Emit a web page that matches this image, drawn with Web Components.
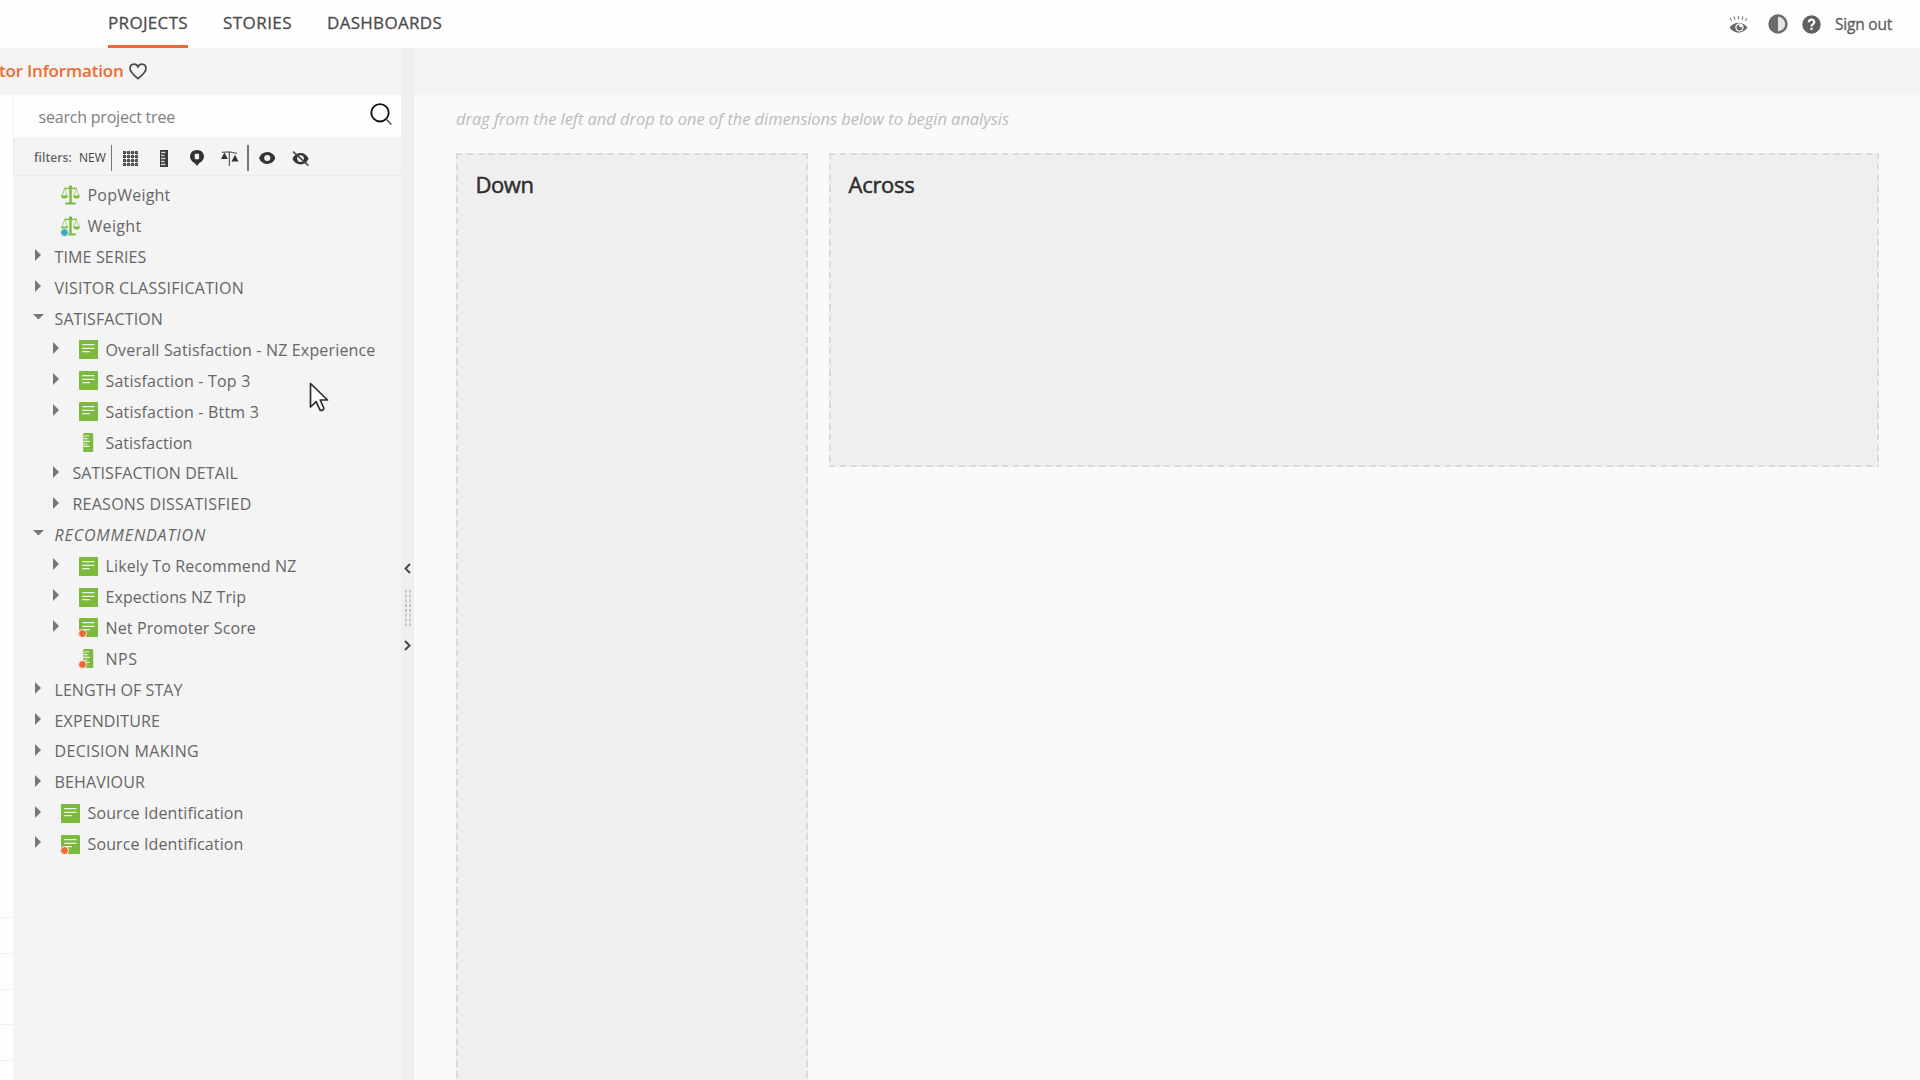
<!DOCTYPE html>
<html lang="en">
<head>
<meta charset="utf-8">
<title>Projects</title>
<style>
  html, body {
    height: 100%;
    margin: 0;
    overflow: hidden;
  }

  body {
    background: #fefefe;
    font-family: "Open Sans", "Noto Sans", sans-serif;
  }
</style>
</head>
<body>
<project-page></project-page>

<script>
// Spreads the letters of an element so that its text takes a given width
function fitText(el, width) {
  if (!width) return;
  el.style.letterSpacing = '0px';
  const natural = el.getBoundingClientRect().width;
  const count = el.textContent.length;
  el.style.letterSpacing = `${(width - natural) / count}px`;
}

// fit-text: a single line of text with a set width
class FitText extends HTMLElement {
  constructor() {
    super();
    this.attachShadow({ mode: 'open' });
    this.shadowRoot.innerHTML = `
      <style>
        :host { display: inline-block; white-space: nowrap; flex: none; }
      </style>
      <slot></slot>
    `;
  }

  connectedCallback() {
    fitText(this, Number(this.getAttribute('width')));
  }
}

// svg bodies for ui-icon, all drawn on their own viewBox
const ICONS = {
  wink: ['0 0 20 20', `
    <g fill="none" stroke="#777" stroke-width="1.1">
      <path d="M1 3.2 3 6M5.2 1.5 6.4 5M10 .8V4.5M14.8 1.5 13.6 5M19 3.2 17 6"/>
    </g>
    <path d="M.6 13.2C5 6.6 15 6.6 19.4 13.2 15 20.4 5 20.4.6 13.2z" fill="#686868"/>
    <circle cx="11" cy="13" r="4.4" fill="#fefefe"/>
    <circle cx="11" cy="13.2" r="3" fill="#686868"/>
    <circle cx="12.3" cy="11.6" r="1.5" fill="#fefefe"/>`],
  contrast: ['0 0 20 20', `
    <circle cx="10" cy="10" r="9.7" fill="#6b6b6b"/>
    <path d="M10 2.8a7.2 7.2 0 0 1 0 14.4z" fill="#e6e6e6"/>`],
  help: ['0 0 20 20', `
    <circle cx="10" cy="10" r="9.7" fill="#606060"/>
    <path d="M7.2 7.6C7.2 4 13 4 12.9 7.5 12.8 9.6 10 9.6 10 12" fill="none" stroke="#fefefe" stroke-width="2.3"/>
    <rect x="8.8" y="13.4" width="2.4" height="2.3" fill="#fefefe"/>`],
  heart: ['0 0 18 17', `
    <path d="M9 15.6C4 11.5 1 8.8 1 5.4 1 .6 7 -.4 9 3.8 11 -.4 17 .6 17 5.4 17 8.8 14 11.5 9 15.6z" fill="none" stroke="#484848" stroke-width="1.7"/>`],
  search: ['0 0 22 22', `
    <circle cx="10" cy="9.8" r="8.7" fill="none" stroke="#111" stroke-width="1.9"/>
    <path d="M16 16 21.4 21.4" stroke="#444" stroke-width="1.4"/>`],
  grid: ['0 0 15 15', `
    <g fill="#3a3a3a">
      ${[0, 4, 8, 12].map(y => [0, 4, 8, 12].map(x =>
        `<rect x="${x}" y="${y}" width="3" height="3" rx=".6"/>`).join('')).join('')}
    </g>
    <path d="M0 1.5H15M0 5.5H15M0 9.5H15M0 13.5H15M1.5 0V15M5.5 0V15M9.5 0V15M13.5 0V15" stroke="#666" stroke-width=".6"/>`],
  ruler: ['0 0 8 17', `
    <rect width="8" height="17" fill="#3a3a3a"/>
    <path d="M1 2.5H5.5M1 5.5H4.5M1 8.5H5.5M1 11.5H4.5M1 14.5H5.5" stroke="#ccc" stroke-width="1.3"/>`],
  pin: ['0 0 14 16', `
    <path d="M7 0C11 0 14 2.8 14 6.6 14 10 11 12.4 9.4 13L7 16 4.6 13C3 12.4 0 10 0 6.6 0 2.8 3 0 7 0z" fill="#333"/>
    <rect x="4.7" y="3.8" width="4.4" height="5.4" rx="1" fill="#f0f0f0"/>`],
  balance: ['0 0 18 15', `
    <path d="M1 1.3 8.5.8 16.5 2.3M8.6 1V15" fill="none" stroke="#666" stroke-width="1.3"/>
    <path d="M0 8 3.6 1.5 7 8z" fill="#333"/>
    <path d="M10.8 10.5 14.4 3.8 18 10.5z" fill="#333"/>`],
  eye: ['0 0 16 12', `
    <path d="M0 6C3 -2 13 -2 16 6 13 14 3 14 0 6z" fill="#333"/>
    <circle cx="8" cy="6" r="3" fill="#f2f2f2"/>`],
  eyeOff: ['0 0 17 15', `
    <path d="M.5 7.8C3.5 0 13.5 0 16.5 7.8 13.5 15.4 3.5 15.4.5 7.8z" fill="#333"/>
    <circle cx="8.5" cy="7.6" r="3.4" fill="#eee"/>
    <path d="M1 .6 16.5 14.6" stroke="#444" stroke-width="1.5"/>`],
  question: ['0 0 19 19', `
    <rect width="19" height="19" rx=".8" fill="#7cba3d"/>
    <path d="M3.2 4.7H15.5M3.2 8.3H15.5M3.2 11.7H10.8" stroke="#edf6e2" stroke-width="1.3"/>`],
  measure: ['0 0 19 19', `
    <rect x="4.2" width="10" height="19" rx=".8" fill="#7cba3d"/>
    <path d="M4.4 3H10M4.4 5.6H8.5M4.4 8.4H10.8M4.4 11H8.5M4.4 13.4H10.5" stroke="#edf6e2" stroke-width="1.2"/>`],
  weight: ['0 0 19 20', `
    <rect x="8.3" y="1" width="2.4" height="17" fill="#7cba3d"/>
    <circle cx="9.5" cy="1.8" r="1.6" fill="#7cba3d"/>
    <path d="M5 18.4H14" stroke="#7cba3d" stroke-width="2" stroke-linecap="round"/>
    <path d="M3 3.4H16" stroke="#7cba3d" stroke-width="1.4"/>
    <path d="M3.6 3.4.8 11M3.6 3.4 6.2 11M15.4 3.4 12.8 11M15.4 3.4 18.2 11" stroke="#9bcb6a" stroke-width=".9"/>
    <path d="M0 10.4H7C6.6 14.6.4 14.6 0 10.4zM12 10.4H19C18.6 14.6 12.4 14.6 12 10.4z" fill="#7cba3d"/>`],
  left: ['0 0 7 11', '<path d="M6 1 1.5 5.5 6 10" fill="none" stroke="#444" stroke-width="1.9"/>'],
  right: ['0 0 7 11', '<path d="M1 1 5.5 5.5 1 10" fill="none" stroke="#444" stroke-width="1.9"/>'],
  closed: ['0 0 6 12', '<path d="M0 0 6 6 0 12z" fill="#777"/>'],
  open: ['0 0 11 6', '<path d="M0 0H11L5.5 5.5z" fill="#777"/>'],
  pointer: ['0 0 20 30', `
    <path d="M1.5 1.5V25L7.2 19.6 11 28C12.5 29 15.2 28 14.8 26L11.2 18H18.5z" fill="#fefefe" stroke="#2b2b2b" stroke-width="1.7" stroke-linejoin="round"/>`]
};

// ui-icon: <ui-icon name="eye" w="16" h="12">
class UiIcon extends HTMLElement {
  constructor() {
    super();
    this.attachShadow({ mode: 'open' });
  }

  connectedCallback() {
    const [box, body] = ICONS[this.getAttribute('name')];
    const w = this.getAttribute('w');
    const h = this.getAttribute('h');
    this.shadowRoot.innerHTML = `
      <style>
        :host { display: block; flex: none; width: ${w}px; height: ${h}px; }
        svg { display: block; width: 100%; height: 100%; }
      </style>
      <svg viewBox="${box}" preserveAspectRatio="none">${body}</svg>
    `;
  }
}

// top-nav: main sections on the left, account tools on the right
class TopNav extends HTMLElement {
  constructor() {
    super();
    this.attachShadow({ mode: 'open' });
    this.shadowRoot.innerHTML = `
      <style>
        :host {
          display: flex;
          box-sizing: border-box;
          height: 48px;
          justify-content: space-between;
          padding: 0 28px 0 108px;
          background: #fefefe;
          color: #4c4c4c;
          -webkit-text-stroke: 0.3px;
        }
        nav { display: flex; gap: 35px; }
        nav a {
          box-sizing: border-box;
          height: 48px;
          border-bottom: 3px solid transparent;
          font-size: 17px;
          line-height: 45px;
        }
        nav a.active { border-color: #ed6b33; }
        .tools { display: flex; align-items: center; }
        .tools fit-text { font-size: 15.5px; color: #5c5c5c; margin-left: 14px; }
      </style>
      <nav>
        <a class="active"><fit-text width="80">PROJECTS</fit-text></a>
        <a><fit-text width="69">STORIES</fit-text></a>
        <a><fit-text width="115">DASHBOARDS</fit-text></a>
      </nav>
      <div class="tools">
        <ui-icon name="wink" w="19" h="19"></ui-icon>
        <ui-icon name="contrast" w="20" h="20" style="margin-left:20px"></ui-icon>
        <ui-icon name="help" w="19" h="19" style="margin-left:14px"></ui-icon>
        <fit-text width="57">Sign out</fit-text>
      </div>
    `;
  }
}

// tree-row: one entry of the project tree
class TreeRow extends HTMLElement {
  constructor() {
    super();
    this.attachShadow({ mode: 'open' });
  }

  set data(row) {
    const { text, level = 0, icon, arrow, dot, width, italic } = row;
    const marker = !arrow ? ''
      : arrow === 'open' ? '<ui-icon name="open" w="11" h="6"></ui-icon>'
      : '<ui-icon name="closed" w="6" h="12"></ui-icon>';
    const height = icon === 'weight' ? 20 : 19;
    this.shadowRoot.innerHTML = `
      <style>
        :host {
          display: flex;
          align-items: center;
          height: 30.9px;
          padding-left: ${17.5 + level * 18}px;
          color: #666;
          font-size: 16px;
        }
        .arrow {
          display: flex;
          flex: none;
          width: 15px;
          margin-right: 9px;
          padding-bottom: 3.5px;
          justify-content: center;
        }
        .icon { position: relative; margin: 0 7.5px 0 6.5px; }
        .dot {
          position: absolute;
          left: -1px;
          bottom: -1px;
          width: 7px;
          height: 7px;
          border: 1px solid #f4f4f4;
          border-radius: 50%;
          background: ${dot || 'none'};
        }
        fit-text { font-style: ${italic ? 'italic' : 'normal'}; }
      </style>
      <span class="arrow">${marker}</span>
      ${icon ? `<span class="icon"><ui-icon name="${icon}" w="19" h="${height}"></ui-icon>${dot ? '<i class="dot"></i>' : ''}</span>` : ''}
      <fit-text width="${width}">${text}</fit-text>
    `;
  }
}

const ROWS = [
  { text: 'PopWeight', icon: 'weight', width: 83 },
  { text: 'Weight', icon: 'weight', dot: '#35b0c0', width: 54 },
  { text: 'TIME SERIES', arrow: 'closed', width: 92 },
  { text: 'VISITOR CLASSIFICATION', arrow: 'closed', width: 189.5 },
  { text: 'SATISFACTION', arrow: 'open', width: 108.5 },
  { text: 'Overall Satisfaction - NZ Experience', level: 1, icon: 'question', arrow: 'closed', width: 270 },
  { text: 'Satisfaction - Top 3', level: 1, icon: 'question', arrow: 'closed', width: 145 },
  { text: 'Satisfaction - Bttm 3', level: 1, icon: 'question', arrow: 'closed', width: 153.5 },
  { text: 'Satisfaction', level: 1, icon: 'measure', width: 87 },
  { text: 'SATISFACTION DETAIL', level: 1, arrow: 'closed', width: 165.5 },
  { text: 'REASONS DISSATISFIED', level: 1, arrow: 'closed', width: 179 },
  { text: 'RECOMMENDATION', arrow: 'open', italic: true, width: 151.5 },
  { text: 'Likely To Recommend NZ', level: 1, icon: 'question', arrow: 'closed', width: 191 },
  { text: 'Expections NZ Trip', level: 1, icon: 'question', arrow: 'closed', width: 140.5 },
  { text: 'Net Promoter Score', level: 1, icon: 'question', arrow: 'closed', dot: '#ed6b33', width: 150.5 },
  { text: 'NPS', level: 1, icon: 'measure', dot: '#ed6b33', width: 32 },
  { text: 'LENGTH OF STAY', arrow: 'closed', width: 128 },
  { text: 'EXPENDITURE', arrow: 'closed', width: 105.5 },
  { text: 'DECISION MAKING', arrow: 'closed', width: 144.5 },
  { text: 'BEHAVIOUR', arrow: 'closed', width: 90.5 },
  { text: 'Source Identification', icon: 'question', arrow: 'closed', width: 156 },
  { text: 'Source Identification', icon: 'question', arrow: 'closed', dot: '#ed6b33', width: 156 }
];

// project-tree: search box, filter bar and the tree itself
class ProjectTree extends HTMLElement {
  constructor() {
    super();
    this.attachShadow({ mode: 'open' });
    this.shadowRoot.innerHTML = `
      <style>
        :host {
          display: flex;
          flex-direction: column;
          background: #f4f4f4;
        }
        .search {
          display: flex;
          flex: none;
          height: 43px;
          box-sizing: border-box;
          align-items: center;
          justify-content: space-between;
          padding: 0 9px 0 24.5px;
          border-left: 1px solid #f3f3f5;
          background: #fefefe;
          color: #808080;
          font-size: 16px;
        }
        .search ui-icon { margin-bottom: 5px; }
        .search fit-text { padding-top: 1px; }
        .filters {
          display: flex;
          flex: none;
          height: 38px;
          box-sizing: border-box;
          align-items: center;
          padding-left: 20px;
          border: solid #e9eaee;
          border-width: 1px 0 1px 1px;
          font-size: 12px;
          color: #444;
        }
        .filters b { color: #666; font-weight: 600; }
        .bar { flex: none; width: 2px; height: 26px; margin-top: 1px; background: #777; }
        .filters ui-icon { margin-top: 2px; }
        .rows { padding-top: 4px; }
      </style>
      <div class="search">
        <fit-text width="136.5">search project tree</fit-text>
        <ui-icon name="search" w="22" h="22"></ui-icon>
      </div>
      <div class="filters">
        <b><fit-text width="38">filters:</fit-text></b>
        <fit-text width="27" style="margin-left:7px">NEW</fit-text>
        <span class="bar" style="width:1px;margin-left:5px"></span>
        <ui-icon name="grid" w="15" h="15" style="margin-left:11px"></ui-icon>
        <ui-icon name="ruler" w="8" h="17" style="margin-left:21.5px"></ui-icon>
        <ui-icon name="pin" w="14" h="16" style="margin-left:22px"></ui-icon>
        <ui-icon name="balance" w="17.5" h="15" style="margin-left:17.5px"></ui-icon>
        <span class="bar" style="margin-left:8.5px"></span>
        <ui-icon name="eye" w="16.5" h="12" style="margin-left:9.5px"></ui-icon>
        <ui-icon name="eyeOff" w="17" h="15" style="margin-left:16.5px"></ui-icon>
      </div>
      <div class="rows"></div>
    `;
    const rows = this.shadowRoot.querySelector('.rows');
    ROWS.forEach(row => {
      const el = document.createElement('tree-row');
      rows.append(el);
      el.data = row;
    });
  }
}

// pane-splitter: the bar between tree and analysis, with its handle
class PaneSplitter extends HTMLElement {
  constructor() {
    super();
    this.attachShadow({ mode: 'open' });
    this.shadowRoot.innerHTML = `
      <style>
        :host {
          display: flex;
          flex-direction: column;
          align-items: center;
          box-sizing: border-box;
          padding-top: 515px;
          background: #efefef;
        }
        .grip {
          width: 8px;
          height: 37px;
          margin: 15px 0 14px 1px;
          background: radial-gradient(circle, #c4c4c4 1.1px, transparent 1.5px) 0 0 / 4px 4.75px;
        }
      </style>
      <ui-icon name="left" w="7" h="11"></ui-icon>
      <div class="grip"></div>
      <ui-icon name="right" w="7" h="11"></ui-icon>
    `;
  }
}

// drop-zone: dashed target for a dimension
class DropZone extends HTMLElement {
  constructor() {
    super();
    this.attachShadow({ mode: 'open' });
    this.shadowRoot.innerHTML = `
      <style>
        :host {
          --dash: #dadada 0 6.5px, transparent 6.5px 10.8px;
          display: block;
          box-sizing: border-box;
          padding: 16px 19.5px;
          background:
            repeating-linear-gradient(90deg, var(--dash)) top / 100% 2px no-repeat,
            repeating-linear-gradient(90deg, var(--dash)) bottom / 100% 2px no-repeat,
            repeating-linear-gradient(180deg, var(--dash)) left / 2px 100% no-repeat,
            repeating-linear-gradient(180deg, var(--dash)) right / 2px 100% no-repeat,
            #efefef;
          color: #2e2e2e;
          font-size: 22px;
          line-height: 30px;
          -webkit-text-stroke: 0.5px;
        }
      </style>
      <slot></slot>
    `;
  }
}

class ProjectPage extends HTMLElement {
  constructor() {
    super();
    this.attachShadow({ mode: 'open' });
    this.shadowRoot.innerHTML = `
      <style>
        :host {
          display: grid;
          grid-template: 48px 47px 1fr / 13px 388px 13px 1fr;
          height: 100vh;
          overflow: hidden;
        }
        top-nav { grid-column: 1 / -1; }
        .title {
          display: flex;
          grid-column: 1 / 3;
          align-items: center;
          box-sizing: border-box;
          padding-bottom: 2px;
          background: #f4f4f4;
          color: #ed6b33;
          font-size: 17px;
          font-weight: 600;
        }
        .title fit-text { margin-left: -1px; margin-right: 5.5px; }
        .title ui-icon { margin-top: 2px; }
        .strip { grid-area: 2 / 4; background: #f4f4f4; }
        .gutter {
          display: grid;
          grid-area: 3 / 1;
          align-content: end;
          grid-template-rows: repeat(4, 35.7px) 20px;
        }
        .gutter i { border-top: 1px solid #f1f1f1; }
        project-tree { grid-area: 3 / 2; min-height: 0; }
        pane-splitter { grid-area: 2 / 3 / 4; min-height: 0; }
        main {
          display: grid;
          grid-area: 3 / 4;
          grid-template: 58px 314px 1fr / 352px 1050px;
          column-gap: 21px;
          padding-left: 42px;
          background: #fafafa;
        }
        .hint {
          grid-column: 1 / -1;
          color: #bcbcbc;
          font-size: 16.5px;
          font-style: italic;
          line-height: 47px;
        }
        .down { grid-row: 2 / 4; margin-bottom: -20px; }
        .pointer { position: absolute; left: 309px; top: 382px; }
      </style>
      <top-nav></top-nav>
      <div class="title">
        <fit-text width="124.5">tor Information</fit-text>
        <ui-icon name="heart" w="18" h="17"></ui-icon>
      </div>
      <div class="strip"></div>
      <div class="gutter"><i></i><i></i><i></i><i></i><i></i></div>
      <project-tree></project-tree>
      <pane-splitter></pane-splitter>
      <main>
        <div class="hint"><fit-text width="553">drag from the left and drop to one of the dimensions below to begin analysis</fit-text></div>
        <drop-zone class="down"><fit-text width="58">Down</fit-text></drop-zone>
        <drop-zone><fit-text width="66">Across</fit-text></drop-zone>
      </main>
      <ui-icon class="pointer" name="pointer" w="20" h="30"></ui-icon>
    `;
  }
}

customElements.define('fit-text', FitText);
customElements.define('ui-icon', UiIcon);
customElements.define('top-nav', TopNav);
customElements.define('tree-row', TreeRow);
customElements.define('project-tree', ProjectTree);
customElements.define('pane-splitter', PaneSplitter);
customElements.define('drop-zone', DropZone);
customElements.define('project-page', ProjectPage);
</script>
</body>
</html>
